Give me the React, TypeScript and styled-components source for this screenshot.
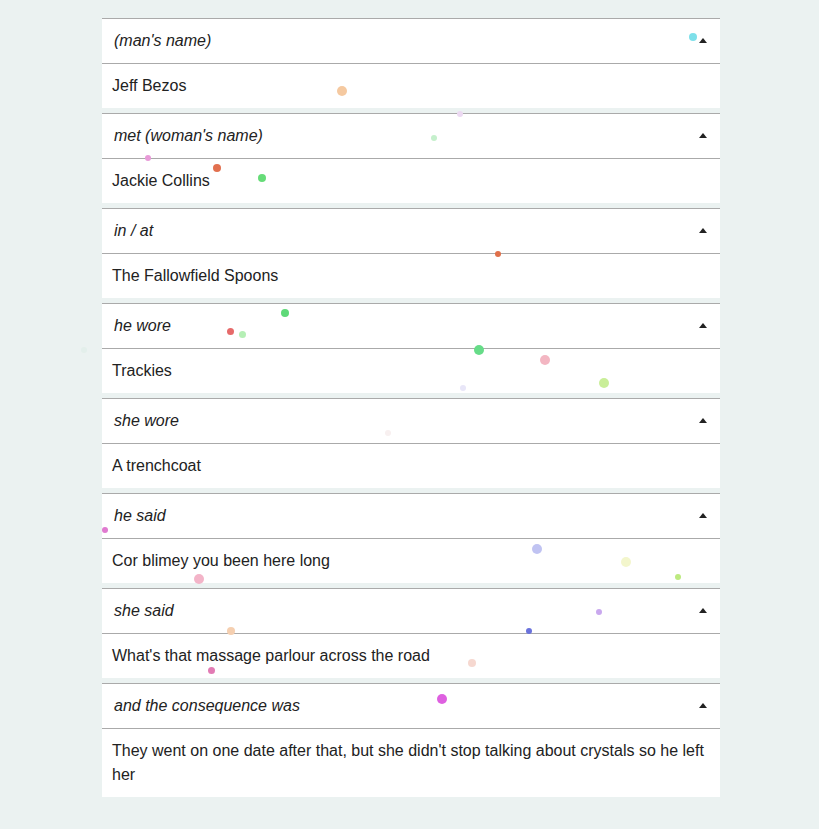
import React from "react";
import styled, { createGlobalStyle } from "styled-components";

const Global = createGlobalStyle`
  html, body { margin: 0; padding: 0; background: #ebf2f1; }
  body { font-family: "Liberation Sans", Arial, sans-serif; color: #222; }
`;

const Page = styled.div`
  position: relative;
  min-height: 829px;
  padding-top: 18px;
  box-sizing: border-box;
`;

const List = styled.div`
  width: 618px;
  margin-left: 102px;
  display: flex;
  flex-direction: column;
  gap: 5px;
`;

const Section = styled.section`
  background: #fff;
  border-top: 1px solid #aaa;
`;

const Header = styled.div`
  height: 44px;
  display: flex;
  align-items: center;
  justify-content: space-between;
  padding: 0 13px 0 12px;
  border-bottom: 1px solid #aaa;
  font-size: 16px;
  font-style: italic;
`;

const Arrow = styled.span`
  width: 0;
  height: 0;
  border-left: 4.5px solid transparent;
  border-right: 4.5px solid transparent;
  border-bottom: 5px solid #222;
  margin-bottom: 2px;
`;

const Answer = styled.div`
  padding: 10px 10px;
  font-size: 16px;
  line-height: 24px;
`;

const Dots = styled.div`
  position: absolute;
  inset: 0;
  pointer-events: none;
`;

const Dot = styled.span<{ $c: string }>`
  position: absolute;
  border-radius: 50%;
  background: ${(p) => p.$c};
`;

const items = [
  ["(man's name)", "Jeff Bezos"],
  ["met (woman's name)", "Jackie Collins"],
  ["in / at", "The Fallowfield Spoons"],
  ["he wore", "Trackies"],
  ["she wore", "A trenchcoat"],
  ["he said", "Cor blimey you been here long"],
  ["she said", "What's that massage parlour across the road"],
  [
    "and the consequence was",
    "They went on one date after that, but she didn't stop talking about crystals so he left her",
  ],
];

const dots: [number, number, number, string][] = [
  [693, 37, 4, "#7ee0ea"],
  [342, 91, 5, "#f5c9a0"],
  [460, 114, 3, "#ecd9f2"],
  [434, 138, 3, "#c5f0cc"],
  [148, 158, 3, "#e89ad8"],
  [217, 168, 4, "#e2704f"],
  [262, 178, 4, "#66dc78"],
  [498, 254, 3, "#e0704a"],
  [285, 313, 4, "#5ed978"],
  [230, 331, 3.5, "#e66a6a"],
  [242, 334, 3.5, "#b5efb5"],
  [84, 350, 3, "#e3efeb"],
  [479, 350, 5, "#66dc88"],
  [545, 360, 5, "#f3b6c2"],
  [604, 383, 5, "#c9ee98"],
  [463, 388, 3, "#e8e6f8"],
  [388, 433, 3, "#f8f0f0"],
  [105, 530, 3, "#e07ad0"],
  [537, 549, 5, "#c0c3f2"],
  [626, 562, 5, "#f3f6cc"],
  [678, 577, 3, "#bdea80"],
  [199, 579, 5, "#f3b4c8"],
  [599, 612, 3, "#c9a8ee"],
  [231, 631, 4, "#f5cfb0"],
  [529, 631, 3, "#6a72dc"],
  [472, 663, 4, "#f6d8d0"],
  [211, 670, 3.5, "#e27bb4"],
  [442, 699, 5, "#de60e0"],
];

export default function App() {
  return (
    <>
      <Global />
      <Page>
        <List>
          {items.map(([q, a]) => (
            <Section key={q}>
              <Header>
                <span>{q}</span>
                <Arrow />
              </Header>
              <Answer>{a}</Answer>
            </Section>
          ))}
        </List>
        <Dots>
          {dots.map(([x, y, r, c], i) => (
            <Dot
              key={i}
              $c={c}
              style={{ left: x - r, top: y - r, width: r * 2, height: r * 2 }}
            />
          ))}
        </Dots>
      </Page>
    </>
  );
}
